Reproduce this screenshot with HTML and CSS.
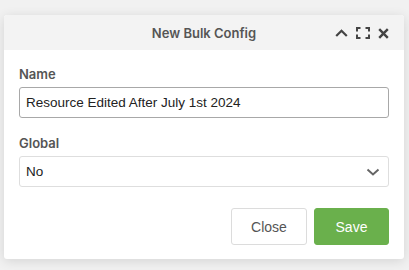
FILE: index.html
```html
<!DOCTYPE html>
<html>
<head>
<meta charset="utf-8">
<link rel="stylesheet" href="styles.css">
</head>
<body>
<div class="modal">
  <div class="modal-header">
    <div class="title">New Bulk Config</div>
    <div class="tools">
      <svg class="icon" width="13" height="10" viewBox="0 0 13 10"><path d="M1.2 8 L6.5 2.7 L11.8 8" fill="none" stroke="#444" stroke-width="2.2"/></svg>
      <svg class="icon" width="14" height="12" viewBox="0 0 14 12"><path d="M1 4.5 V1 H4.5 M9.5 1 H13 V4.5 M13 7.5 V11 H9.5 M4.5 11 H1 V7.5" fill="none" stroke="#444" stroke-width="2"/></svg>
      <svg class="icon" width="11" height="11" viewBox="0 0 11 11"><path d="M1.2 1.2 L9.8 9.8 M9.8 1.2 L1.2 9.8" fill="none" stroke="#444" stroke-width="2.4"/></svg>
    </div>
  </div>
  <div class="modal-body">
    <label class="label">Name</label>
    <div class="input">Resource Edited After July 1st 2024</div>
    <label class="label second">Global</label>
    <div class="select">
      <span>No</span>
      <svg width="14" height="8" viewBox="0 0 14 8"><path d="M1.5 1.5 L7 6.5 L12.5 1.5" fill="none" stroke="#666" stroke-width="2"/></svg>
    </div>
    <div class="actions">
      <button class="btn btn-default">Close</button>
      <button class="btn btn-save">Save</button>
    </div>
  </div>
</div>
</body>
</html>
```

FILE: styles.css
```css
html, body {
  margin: 0;
  padding: 0;
}
body {
  background: #f1f1f1;
  font-family: "Liberation Sans", Arial, sans-serif;
  width: 409px;
  height: 270px;
  overflow: hidden;
  padding-top: 15px;
  box-sizing: border-box;
}
.modal {
  margin-left: 4px;
  width: 400px;
  height: 244px;
  background: #fff;
  border-radius: 3px;
  box-shadow: 0 2px 12px rgba(0,0,0,0.12);
  overflow: hidden;
}
.modal-header {
  height: 35px;
  background: #f3f3f3;
  position: relative;
  display: flex;
  align-items: center;
  justify-content: center;
}
.title {
  font-family: "Inter", "Liberation Sans", sans-serif;
  font-weight: 600;
  font-size: 13px;
  color: #555;
}
.tools {
  position: absolute;
  right: 15px;
  top: 12px;
  display: flex;
  align-items: center;
  gap: 8px;
}
.icon {
  display: block;
}
.modal-body {
  padding: 16px 15px 14px 15px;
}
.label {
  display: block;
  font-family: "Inter", "Liberation Sans", sans-serif;
  font-weight: 600;
  font-size: 13px;
  color: #555;
  line-height: 16px;
  margin-bottom: 5px;
}
.label.second {
  margin-top: 17px;
}
.input {
  height: 31px;
  box-sizing: border-box;
  border: 1px solid #a8a8a8;
  border-radius: 3px;
  padding: 0 6px;
  display: flex;
  align-items: center;
  font-family: "Liberation Sans", Arial, sans-serif;
  font-size: 13.5px;
  color: #222;
}
.select {
  height: 31px;
  box-sizing: border-box;
  border: 1px solid #dedede;
  border-radius: 3px;
  padding: 0 8px 0 6px;
  display: flex;
  align-items: center;
  justify-content: space-between;
  font-family: "Liberation Sans", Arial, sans-serif;
  font-size: 13.5px;
  color: #222;
}
.actions {
  display: flex;
  justify-content: flex-end;
  gap: 7px;
  margin-top: 21px;
}
.btn {
  height: 37px;
  width: 76px;
  border-radius: 3px;
  font-family: "Liberation Sans", Arial, sans-serif;
  font-size: 14px;
  padding: 0;
}
.btn-default {
  background: #fff;
  border: 1px solid #dcdcdc;
  color: #555;
}
.btn-save {
  width: 75px;
  background: #6ab04c;
  border: 1px solid #6ab04c;
  color: #fff;
}
```
